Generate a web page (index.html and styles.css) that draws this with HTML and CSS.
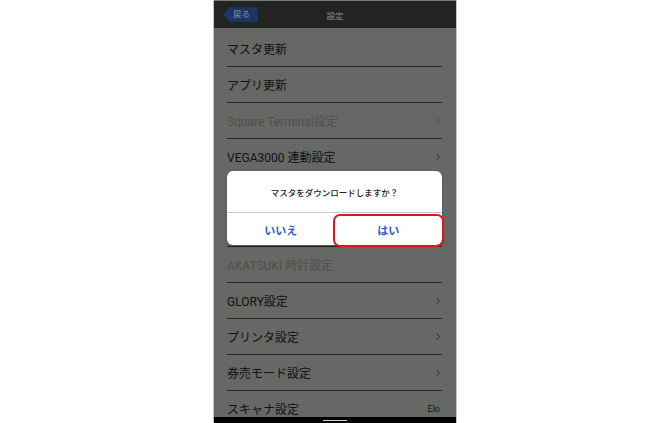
FILE: index.html
```html
<!DOCTYPE html>
<html lang="ja">
<head>
<meta charset="utf-8">
<title>設定</title>
<link rel="stylesheet" href="styles.css">
</head>
<body>
<div class="phone">
  <header class="appbar">
    <div class="back">戻る</div>
    <div class="title">設定</div>
  </header>
  <div class="list">
    <div class="row">マスタ更新</div>
    <div class="row">アプリ更新</div>
    <div class="row disabled"><span>Square Terminal設定</span><svg class="chev" viewBox="0 0 4 7"><path d="M0.5 0.5 L3.5 3.5 L0.5 6.5"/></svg></div>
    <div class="row"><span>VEGA3000 連動設定</span><svg class="chev" viewBox="0 0 4 7"><path d="M0.5 0.5 L3.5 3.5 L0.5 6.5"/></svg></div>
    <div class="row"></div>
    <div class="row"></div>
    <div class="row disabled">AKATSUKI 時計設定</div>
    <div class="row"><span>GLORY設定</span><svg class="chev" viewBox="0 0 4 7"><path d="M0.5 0.5 L3.5 3.5 L0.5 6.5"/></svg></div>
    <div class="row"><span>プリンタ設定</span><svg class="chev" viewBox="0 0 4 7"><path d="M0.5 0.5 L3.5 3.5 L0.5 6.5"/></svg></div>
    <div class="row"><span>券売モード設定</span><svg class="chev" viewBox="0 0 4 7"><path d="M0.5 0.5 L3.5 3.5 L0.5 6.5"/></svg></div>
    <div class="row"><span>スキャナ設定</span><span class="value">Elo</span></div>
  </div>
  <div class="navbar"><div class="home"></div></div>

  <div class="dialog">
    <div class="message">マスタをダウンロードしますか？</div>
    <div class="actions">
      <div class="btn">いいえ</div>
      <div class="btn">はい</div>
    </div>
    <div class="highlight"></div>
  </div>
</div>
</body>
</html>
```

FILE: styles.css
```css
html, body {
  margin: 0;
  padding: 0;
  background: #ffffff;
}
body {
  width: 670px;
  height: 423px;
  overflow: hidden;
  display: flex;
  justify-content: center;
  font-family: Roboto, "Noto Sans CJK JP", sans-serif;
}
.phone {
  position: relative;
  width: 242px;
  height: 423px;
  border-left: 1px solid #c4c4c4;
  border-right: 1px solid #c4c4c4;
  display: flex;
  flex-direction: column;
  background: #666865;
  overflow: hidden;
}
.appbar {
  height: 28px;
  flex: none;
  background: #212421;
  border-top: 1px solid #7a7a7a;
  box-sizing: border-box;
  position: relative;
  display: flex;
  align-items: center;
  justify-content: center;
}
.back {
  position: absolute;
  left: 9px;
  top: 6px;
  width: 35px;
  height: 15px;
  box-sizing: border-box;
  padding-left: 10px;
  background: #1d3564;
  clip-path: polygon(0 50%, 7px 0, 100% 0, 100% 100%, 7px 100%);
  color: #8391ad;
  font-size: 8.5px;
  line-height: 15px;
}
.title {
  color: #8c8e8c;
  font-size: 8.5px;
}
.list {
  flex: 1;
  overflow: hidden;
  padding-top: 3px;
}
.row {
  height: 36px;
  box-sizing: border-box;
  margin: 0 14px 0 13px;
  padding-right: 2px;
  border-bottom: 1px solid #242523;
  display: flex;
  align-items: center;
  justify-content: space-between;
  font-size: 12px;
  color: #111211;
}
.row.disabled {
  color: #4e504d;
}
.chev {
  width: 4px;
  height: 7px;
  fill: none;
  stroke: #262725;
  stroke-width: 1;
}
.row.disabled .chev {
  stroke: #4a4c49;
}
.value {
  font-size: 9px;
  color: #111111;
}
.navbar {
  height: 6px;
  flex: none;
  background: #000000;
  display: flex;
  justify-content: center;
  align-items: center;
}
.home {
  width: 24px;
  height: 1px;
  background: #d0d0d0;
}
.dialog {
  position: absolute;
  left: 13px;
  top: 171px;
  width: 215px;
  height: 74px;
  background: #ffffff;
  border-radius: 6px;
  display: flex;
  flex-direction: column;
  box-shadow: 0 1px 3px rgba(0,0,0,0.25);
}
.message {
  height: 42px;
  display: flex;
  align-items: center;
  justify-content: center;
  font-size: 8.5px;
  font-weight: 500;
  color: #222222;
  border-bottom: 1px solid #c9c9c9;
  box-sizing: border-box;
}
.actions {
  flex: 1;
  display: flex;
}
.btn {
  flex: 1;
  display: flex;
  align-items: center;
  justify-content: center;
  font-size: 11px;
  font-weight: 700;
  color: #2f5bcf;
  padding-top: 1px;
}
.highlight {
  position: absolute;
  left: 106px;
  top: 43px;
  width: 111px;
  height: 33px;
  box-sizing: border-box;
  border: 2px solid #e3131c;
  border-radius: 7px;
}
```
